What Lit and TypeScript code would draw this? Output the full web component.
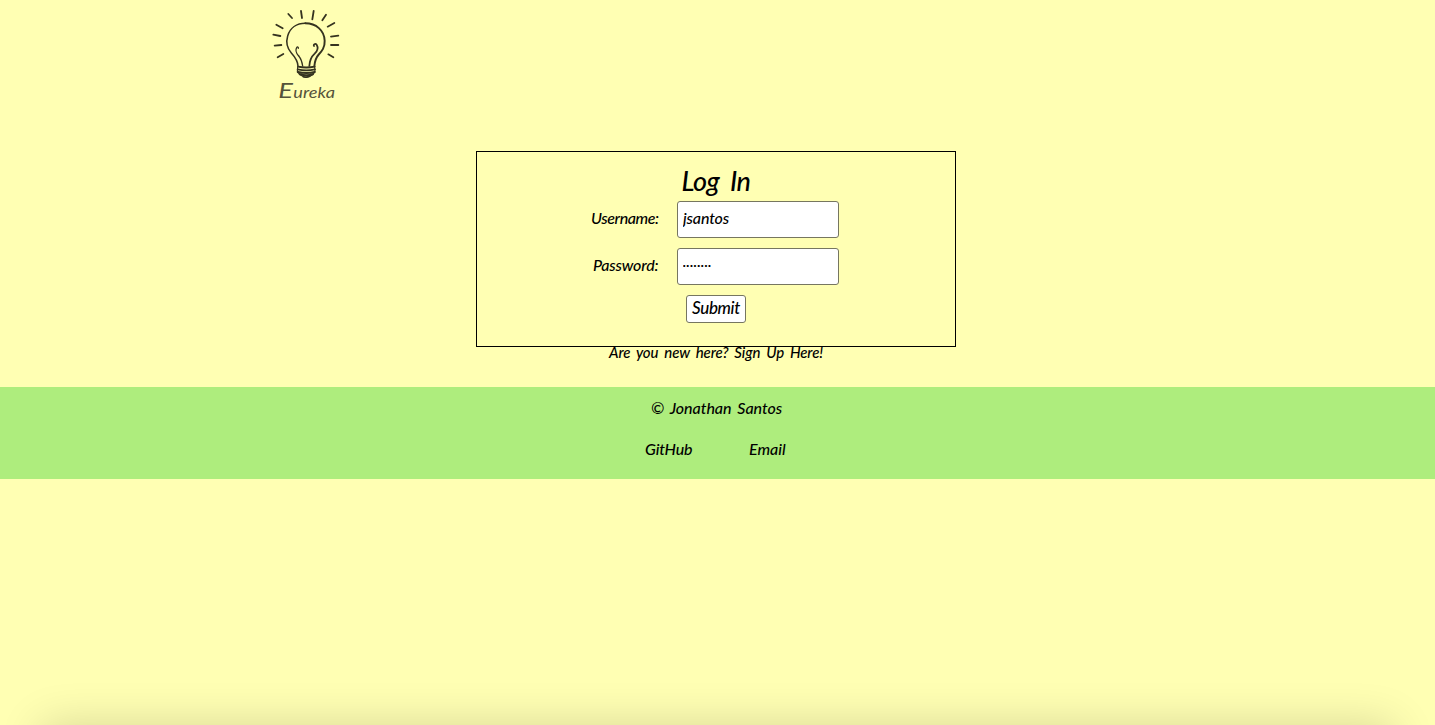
import { LitElement, html, css, svg } from "lit";
import { customElement, state } from "lit/decorators.js";

@customElement("eureka-logo")
export class EurekaLogo extends LitElement {
  static styles = css`
    :host { display: block; width: 90px; height: 110px; }
    svg { display: block; }
    .word { font-family: Lato, sans-serif; font-style: italic; font-weight: 400; fill: #55533a; }
  `;
  private rays = [
    "M117 33L120 54", "M155 33L151 58", "M79 42L90 54", "M192 44L181 61",
    "M43 74L62 85", "M217 69L197 80", "M34 104L55 108", "M229 107L207 110",
    "M38 137L58 135", "M229 135L207 135", "M47 172L64 162", "M214 172L199 163",
  ];
  render() {
    return html`<svg width="90" height="110" viewBox="0 0 270 330" role="img" aria-label="Eureka">
      <g fill="none" stroke="#35331f" stroke-linecap="round" stroke-linejoin="round">
        ${this.rays.map((d) => svg`<path d=${d} stroke-width="5.4"></path>`)}
        <path stroke-width="4.6" d="M108 199C108 181 98 170 88 159C74 143 72 125 77 108C84 84 104 70 130 70"></path>
        <path stroke-width="5.8" d="M130 70C162 70 187 91 188 122C189 142 180 153 169 165C160 175 158 187 157 199"></path>
        <path stroke-width="3.8" d="M122 198C120 184 117 176 110 168C103 160 99 151 104 143C106 139 110 141 109 145M111 168C116 176 120 185 122 198"></path>
        <path stroke-width="5.2" d="M142 198C143 179 147 171 158 161C166 153 169 142 164 134C160 129 153 134 156 138"></path>
        <path stroke-width="5.6" d="M108 200Q133 205 158 200M107 208Q133 214 159 208M108 216Q133 222 158 216M113 223Q133 228 153 223"></path>
        <path stroke-width="3.4" d="M107 201L106 216L116 225Q133 239 150 225L159 216L158 201"></path>
        <path stroke-width="5" d="M124 230Q133 233 143 229"></path>
      </g>
      <text class="word" x="49" y="293" font-size="66" textLength="44" lengthAdjust="spacingAndGlyphs">E</text>
      <text class="word" x="94" y="293" font-size="48" textLength="125" lengthAdjust="spacingAndGlyphs">ureka</text>
    </svg>`;
  }
}

@customElement("app-root")
export class AppRoot extends LitElement {
  @state() private username = "jsantos";
  @state() private password = "........";

  static styles = css`
    :host {
      display: block;
      position: relative;
      height: 725px;
      overflow: hidden;
      background: #ffffb3;
      color: #000;
      font: italic 500 16px/24px Lato, "Open Sans", sans-serif;
    }
    * { box-sizing: border-box; }
    header { height: 151px; padding-left: 262px; }
    main { height: 236px; padding-left: 476px; }
    .card {
      width: 480px; height: 196px; border: 1px solid #000;
      display: flex; flex-direction: column; align-items: center;
    }
    .card > * { flex: none; }
    h1 { margin: 11px 0 2px; font-size: 27px; line-height: 36px; font-weight: 500; letter-spacing: -0.5px; word-spacing: 5px; }
    .row { display: flex; width: 250px; height: 37px; margin-bottom: 10px; }
    label { width: 86px; height: 34px; line-height: 34px; white-space: nowrap; }
    .user { letter-spacing: -0.4px; }
    .pass { letter-spacing: -0.2px; padding-left: 2px; }
    input {
      width: 162px; height: 37px; padding: 0 5px 4px; margin: 0;
      border: 1px solid #767660; border-radius: 3px; background: #fff; color: #000;
      font: inherit; letter-spacing: -0.15px; outline: none;
    }
    .secret { font-weight: 900; letter-spacing: 0.5px; font-size: 13px; padding-bottom: 9px; }
    button {
      width: 60px; height: 28px; padding: 0 0 3px; margin: 0;
      border: 1px solid #767660; border-radius: 3px; background: #fff; color: #000;
      font: inherit; font-size: 17px; line-height: 22px; letter-spacing: -0.35px;
    }
    .signup { margin-top: 17px; font-size: 15px; letter-spacing: -0.12px; word-spacing: 2.6px; white-space: nowrap; }
    footer {
      height: 92px; background: #aeed7d; padding-top: 9px;
      display: flex; flex-direction: column; gap: 17px;
    }
    .copy { padding-left: 651px; letter-spacing: -0.05px; word-spacing: 2.2px; }
    nav { display: flex; padding-left: 645px; }
    .git { width: 104px; letter-spacing: -0.15px; }
    .mail { letter-spacing: 0; }
    .shade {
      position: absolute; top: 100%; left: 42px; right: 42px; height: 100px;
      box-shadow: 0 0 45px rgba(0, 0, 0, 0.16);
    }
  `;

  render() {
    return html`
      <header><eureka-logo></eureka-logo></header>
      <main>
        <form class="card" @submit=${(e: Event) => e.preventDefault()}>
          <h1>Log In</h1>
          <div class="row">
            <label class="user" for="username">Username:</label>
            <input id="username" .value=${this.username} />
          </div>
          <div class="row">
            <label class="pass" for="password">Password:</label>
            <input id="password" class="secret" .value=${this.password} />
          </div>
          <button>Submit</button>
          <div class="signup">Are you new here? Sign Up Here!</div>
        </form>
      </main>
      <footer>
        <div class="copy">© Jonathan Santos</div>
        <nav><span class="git">GitHub</span><span class="mail">Email</span></nav>
      </footer>
      <div class="shade"></div>
    `;
  }
}
